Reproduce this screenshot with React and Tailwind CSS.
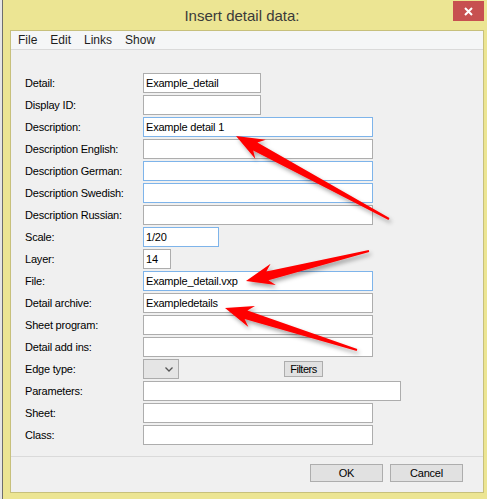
import React from 'react';

// Dialog rows: label, input width and border colour (blue ones are the hovered/active look)
const rows = [
  { label: 'Detail:', box: 'w-[118px] border-[#adadad]', value: 'Example_detail' },
  { label: 'Display ID:', box: 'w-[118px] border-[#adadad]', value: '' },
  { label: 'Description:', box: 'w-[230px] border-[#7eb4ea]', value: 'Example detail 1' },
  { label: 'Description English:', box: 'w-[230px] border-[#adadad]', value: '' },
  { label: 'Description German:', box: 'w-[230px] border-[#7eb4ea]', value: '' },
  { label: 'Description Swedish:', box: 'w-[230px] border-[#7eb4ea]', value: '' },
  { label: 'Description Russian:', box: 'w-[230px] border-[#adadad]', value: '' },
  { label: 'Scale:', box: 'w-[76px] border-[#7eb4ea]', value: '1/20' },
  { label: 'Layer:', box: 'w-[28px] border-[#adadad]', value: '14' },
  { label: 'File:', box: 'w-[230px] border-[#7eb4ea]', value: 'Example_detail.vxp' },
  { label: 'Detail archive:', box: 'w-[230px] border-[#adadad]', value: 'Exampledetails' },
  { label: 'Sheet program:', box: 'w-[230px] border-[#adadad]', value: '' },
  { label: 'Detail add ins:', box: 'w-[230px] border-[#adadad]', value: '' },
  { label: 'Edge type:', combo: true },
  { label: 'Parameters:', box: 'w-[258px] border-[#adadad]', value: '' },
  { label: 'Sheet:', box: 'w-[230px] border-[#adadad]', value: '' },
  { label: 'Class:', box: 'w-[230px] border-[#adadad]', value: '' },
];

const arrows = [
  '236,136 265.8,139.7 257.4,142.5 389.5,218.1 388.5,219.9 253.2,150.5 255.4,159.1',
  '246,281 270.6,263.7 266.3,271.4 368.8,250 369.2,252 268.5,280.2 275.8,285.1',
  '225,308 255,306 247.4,310.4 357.3,349 356.7,351 244.6,319 248.4,327',
];

const Row = ({ row }) => (
  <div className="flex items-center h-[20px]">
    <span className="w-[118px] shrink-0">{row.label}</span>
    {row.combo ? (
      <div className="flex items-center">
        <div className="w-[36px] h-[20px] bg-[#e5e5e5] border border-[#acacac] flex items-center justify-end pr-[5px]">
          <svg width="8" height="5" viewBox="0 0 8 5">
            <path d="M0.5 0.5 L4 4 L7.5 0.5" fill="none" stroke="#555" strokeWidth="1.3" />
          </svg>
        </div>
        <button className="ml-[105px] w-[39px] h-[16px] bg-[#e1e1e1] border border-[#adadad] flex items-center justify-center tracking-[-0.5px] leading-none">
          Filters
        </button>
      </div>
    ) : (
      <div className={`h-[20px] bg-white border flex items-center pl-[2px] ${row.box}`}>
        {row.value}
      </div>
    )}
  </div>
);

export default function App() {
  return (
    <div className="relative w-[487px] h-[499px] flex bg-[#e6e6e6] font-['Liberation_Sans',Arial,sans-serif] text-black overflow-hidden">
      <div className="w-[2px] shrink-0" />
      <div className="flex-1 flex flex-col bg-[#ece593] border-l border-[#6e6e6e]">
        {/* title bar */}
        <div className="h-[30px] shrink-0 grid grid-cols-[1fr_auto_1fr]">
          <div />
          <span className="self-center mr-[6px] text-[15px] text-[#3a3a3a] leading-none">Insert detail data:</span>
          <div className="flex justify-end items-start">
            <div className="mt-[1px] mr-[3px] w-[31px] h-[20px] bg-[#c75050] flex items-center justify-center">
              <svg width="9" height="9" viewBox="0 0 9 9">
                <path d="M1 1 L8 8 M8 1 L1 8" stroke="#fff" strokeWidth="2" />
              </svg>
            </div>
          </div>
        </div>

        {/* client area */}
        <div className="flex-1 ml-[7px] mr-[3px] mb-[6px] border border-[#c7c07c] flex flex-col bg-[#f0f0f0]">
          <div className="h-[19px] shrink-0 bg-[#f5f6f7] border-b border-[#dadada] flex items-center gap-[13px] pl-[7px] text-[12px] text-[#1e1e1e]">
            <span>File</span>
            <span>Edit</span>
            <span>Links</span>
            <span>Show</span>
          </div>

          <div className="flex flex-col gap-[2px] pt-[23px] pl-[14px] text-[11px] tracking-[-0.2px]">
            {rows.map((row) => (
              <Row key={row.label} row={row} />
            ))}
          </div>

          <div className="mt-[11px] h-px bg-[#dadada]" />
          <div className="flex justify-end gap-[7px] pt-[7px] pr-[20px] text-[11px] tracking-[-0.2px]">
            <button className="w-[73px] h-[18px] bg-[#e1e1e1] border border-[#adadad] flex items-center justify-center">OK</button>
            <button className="w-[73px] h-[18px] bg-[#e1e1e1] border border-[#adadad] flex items-center justify-center">Cancel</button>
          </div>
        </div>
      </div>

      {/* red callout arrows */}
      <svg className="absolute inset-0 pointer-events-none" width="487" height="499" viewBox="0 0 487 499">
        <defs>
          <filter id="arrowShadow" x="-20%" y="-20%" width="140%" height="140%">
            <feDropShadow dx="2" dy="3" stdDeviation="2" floodColor="#000" floodOpacity="0.35" />
          </filter>
        </defs>
        {arrows.map((pts) => (
          <polygon key={pts} points={pts} fill="#ff0000" filter="url(#arrowShadow)" />
        ))}
      </svg>
    </div>
  );
}
